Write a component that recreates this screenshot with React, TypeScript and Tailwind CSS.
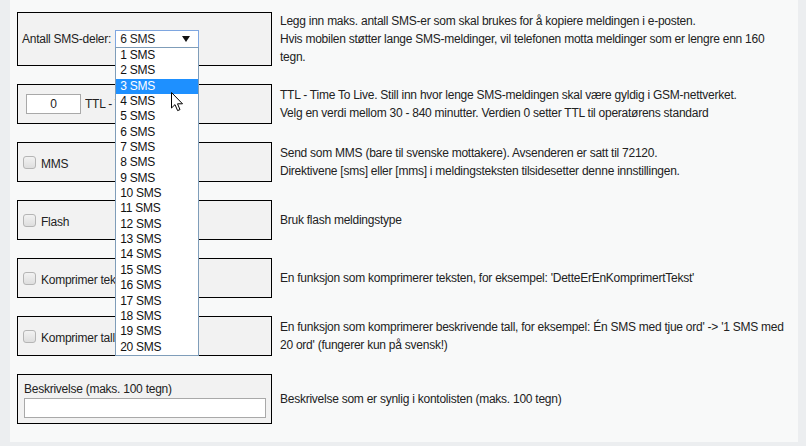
import React from "react";

const options = Array.from({ length: 20 }, (_, i) => `${i + 1} SMS`);

function Checkbox() {
  return (
    <span className="inline-block w-[13px] h-[13px] rounded-[3px] border border-[#b5b5b5] bg-gradient-to-b from-[#f2f2f2] to-[#dedede] shrink-0" />
  );
}

function Row({ left, right, boxClass }: { left: React.ReactNode; right: React.ReactNode; boxClass?: string }) {
  return (
    <div className="flex items-stretch">
      <div className={`w-[255px] shrink-0 border border-black bg-[#f2f2f2] flex ${boxClass ?? "items-center min-h-[40px]"}`}>
        {left}
      </div>
      <div className="self-center pl-[8px] w-[512px] leading-[18px] text-[12px] text-[#222]">{right}</div>
    </div>
  );
}

function Cursor() {
  return (
    <svg className="absolute left-[56px] top-[62px] z-20" width="13" height="20" viewBox="0 0 13 20">
      <path
        d="M0.5 0.5 L0.5 16 L4 12.6 L6.6 18.6 L9 17.6 L6.5 11.8 L11.5 11.8 Z"
        fill="#fff"
        stroke="#000"
        strokeWidth="1"
        strokeLinejoin="miter"
      />
    </svg>
  );
}

export default function App() {
  return (
    <div
      className="w-full h-[446px] bg-[#eceef0] pl-[10px] pr-[8px] pb-[4px] text-[12px] text-[#222] tracking-[-0.25px]"
      style={{ fontFamily: '"Liberation Sans", Arial, sans-serif' }}
    >
      <div className="h-full bg-[#f8f9f9] pl-[7px] pt-[12px] flex flex-col gap-[18px]">
        <Row
          left={
            <div className="flex items-center pl-[4px]">
              <span>Antall SMS-deler:</span>
              <div className="relative ml-[4px]">
                <div className="w-[84px] h-[18px] border border-[#7ea6e0] bg-white flex items-center justify-between pl-[4px] pr-[8px] text-[12px]">
                  <span>6 SMS</span>
                  <svg width="8" height="6" viewBox="0 0 8 6">
                    <path d="M0 0 H8 L4 6 Z" fill="#111" />
                  </svg>
                </div>
                <div className="absolute left-0 top-[17px] z-10 w-[84px] border border-[#7f9db9] bg-white">
                  {options.map((o) => (
                    <div
                      key={o}
                      className={`h-[15.35px] leading-[15.35px] pl-[4px] text-[12px] ${
                        o === "3 SMS" ? "bg-[#1e90ff] text-white" : "text-[#111]"
                      }`}
                    >
                      {o}
                    </div>
                  ))}
                </div>
                <Cursor />
              </div>
            </div>
          }
          right={
            <>
              Legg inn maks. antall SMS-er som skal brukes for å kopiere meldingen i e-posten.
              <br />
              Hvis mobilen støtter lange SMS-meldinger, vil telefonen motta meldinger som er lengre enn 160 tegn.
            </>
          }
        />
        <Row
          left={
            <div className="flex items-center pl-[8px]">
              <div className="w-[55px] h-[20px] border border-[#a9a9a9] bg-white flex items-center justify-center">0</div>
              <span className="ml-[4px] w-[31px] overflow-hidden whitespace-nowrap">TTL - Time</span>
            </div>
          }
          right={
            <>
              TTL - Time To Live. Still inn hvor lenge SMS-meldingen skal være gyldig i GSM-nettverket.
              <br />
              Velg en verdi mellom 30 - 840 minutter. Verdien 0 setter TTL til operatørens standard
            </>
          }
        />
        <Row
          left={
            <div className="flex items-center pl-[5px] gap-[5px]">
              <Checkbox />
              <span className="mt-[3px]">MMS</span>
            </div>
          }
          right={
            <>
              Send som MMS (bare til svenske mottakere). Avsenderen er satt til 72120.
              <br />
              Direktivene [sms] eller [mms] i meldingsteksten tilsidesetter denne innstillingen.
            </>
          }
        />
        <Row
          left={
            <div className="flex items-center pl-[5px] gap-[5px]">
              <Checkbox />
              <span className="mt-[3px]">Flash</span>
            </div>
          }
          right="Bruk flash meldingstype"
        />
        <Row
          left={
            <div className="flex items-center pl-[5px] gap-[5px]">
              <Checkbox />
              <span className="mt-[3px]">Komprimer tekst</span>
            </div>
          }
          right="En funksjon som komprimerer teksten, for eksempel: 'DetteErEnKomprimertTekst'"
        />
        <Row
          left={
            <div className="flex items-center pl-[5px] gap-[5px]">
              <Checkbox />
              <span className="mt-[3px]">Komprimer tall</span>
            </div>
          }
          right="En funksjon som komprimerer beskrivende tall, for eksempel: Én SMS med tjue ord' -> '1 SMS med 20 ord' (fungerer kun på svensk!)"
        />
        <Row
          boxClass="flex-col pt-[6px] pb-[5px] pl-[6px]"
          left={
            <>
              <span className="leading-[16px] mb-[1px]">Beskrivelse (maks. 100 tegn)</span>
              <div className="w-[242px] h-[20px] border border-[#a9a9a9] bg-white" />
            </>
          }
          right="Beskrivelse som er synlig i kontolisten (maks. 100 tegn)"
        />
      </div>
    </div>
  );
}
